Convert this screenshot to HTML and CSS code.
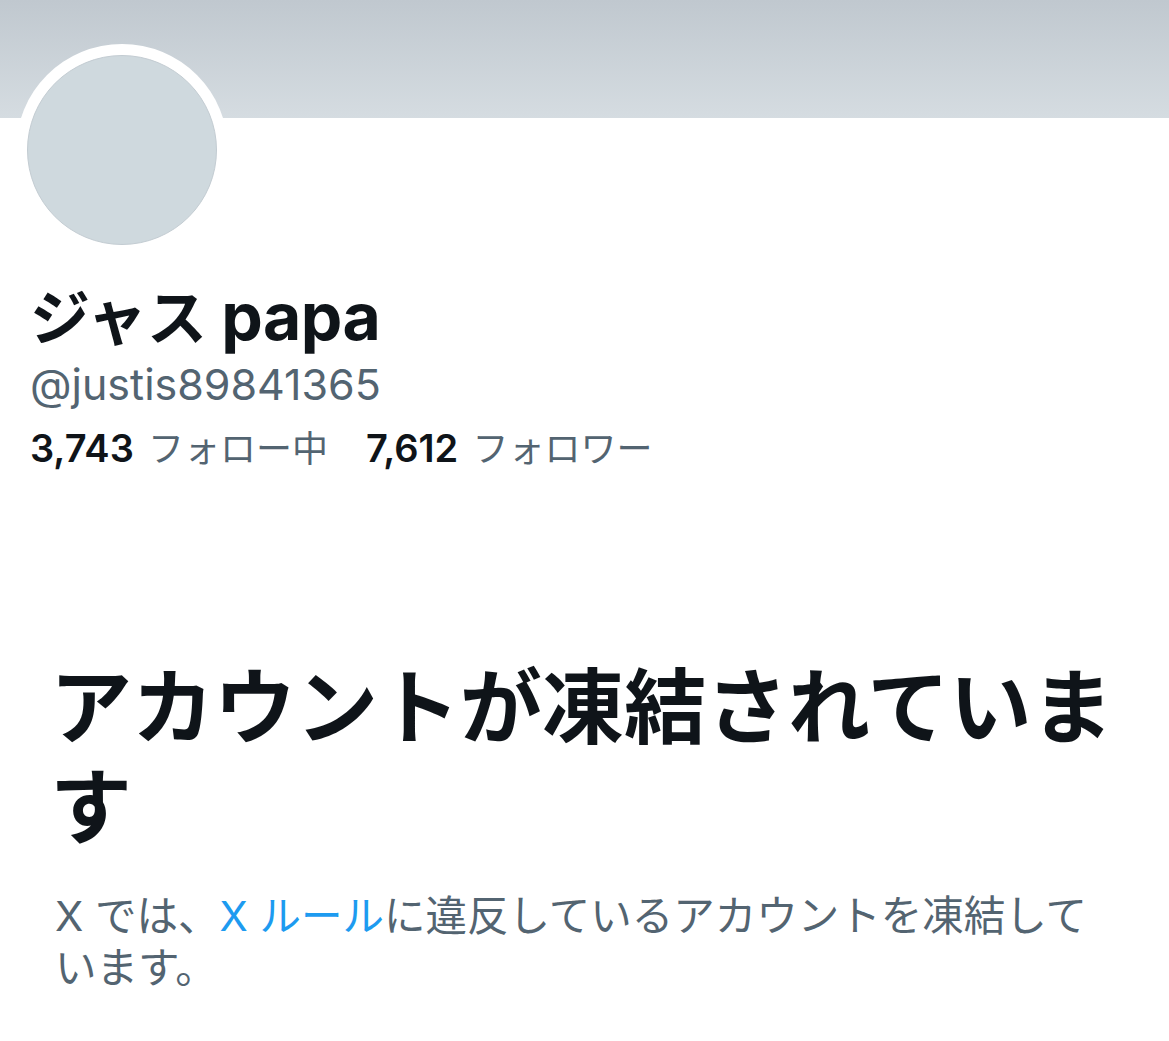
FILE: index.html
```html
<!DOCTYPE html>
<html lang="ja">
<head>
    <meta charset="UTF-8">
    <meta name="viewport" content="width=device-width, initial-scale=1.0">
    <title>ジャスpapa</title>
    <link rel="stylesheet" href="styles.css">
</head>
<body>
    <div class="banner"></div>

    <section class="profile">
        <div class="avatar-ring">
            <div class="avatar"></div>
        </div>
        <h1 class="name">ジャス <span class="latin">papa</span></h1>
        <p class="handle">@justis89841365</p>
        <div class="stats">
            <span><b>3,743</b> フォロー中</span>
            <span><b>7,612</b> フォロワー</span>
        </div>
    </section>

    <section class="suspended">
        <h2>アカウントが凍結されています</h2>
        <p>X では、<a href="#">X ルール</a>に違反しているアカウントを凍結しています。</p>
    </section>
</body>
</html>
```

FILE: styles.css
```css
body {
    margin: 0;
    padding: 0;
    background-color: #fff;
    font-family: Inter, "Noto Sans CJK JP", sans-serif;
    color: #0f1419;
}

.banner {
    height: 118px;
    background: linear-gradient(#c0c8cf, #d5dce1);
}

.profile {
    padding: 0 30px;
}

.avatar-ring {
    width: 212px;
    height: 212px;
    margin: -74px 0 0 -14px;
    border-radius: 50%;
    background-color: #fff;
    display: flex;
    align-items: center;
    justify-content: center;
}

.avatar {
    width: 188px;
    height: 188px;
    border-radius: 50%;
    background-color: #cfd9de;
    border: 1px solid #c3ccd2;
}

.name {
    margin: 20px 0 0;
    font-size: 60px;
    font-weight: 700;
    line-height: 80px;
}

.name .latin {
    font-size: 66px;
    letter-spacing: -0.5px;
}

.handle {
    margin: 0;
    font-size: 43px;
    color: #536471;
    line-height: 52px;
}

.stats {
    margin-top: 10px;
    display: flex;
    gap: 38px;
    font-size: 36px;
    color: #536471;
}

.stats b {
    color: #0f1419;
    font-weight: 600;
    font-size: 38px;
    margin-right: 4px;
}

.suspended {
    padding: 186px 4px 0 50px;
}

.suspended h2 {
    margin: 0;
    font-size: 82px;
    font-weight: 700;
    line-height: 100px;
    max-width: 1100px;
}

.suspended p {
    margin: 32px 0 0 5px;
    font-size: 41.5px;
    line-height: 52px;
    color: #536471;
    max-width: 1050px;
}

.suspended a {
    color: #1d9bf0;
    text-decoration: none;
}
```
